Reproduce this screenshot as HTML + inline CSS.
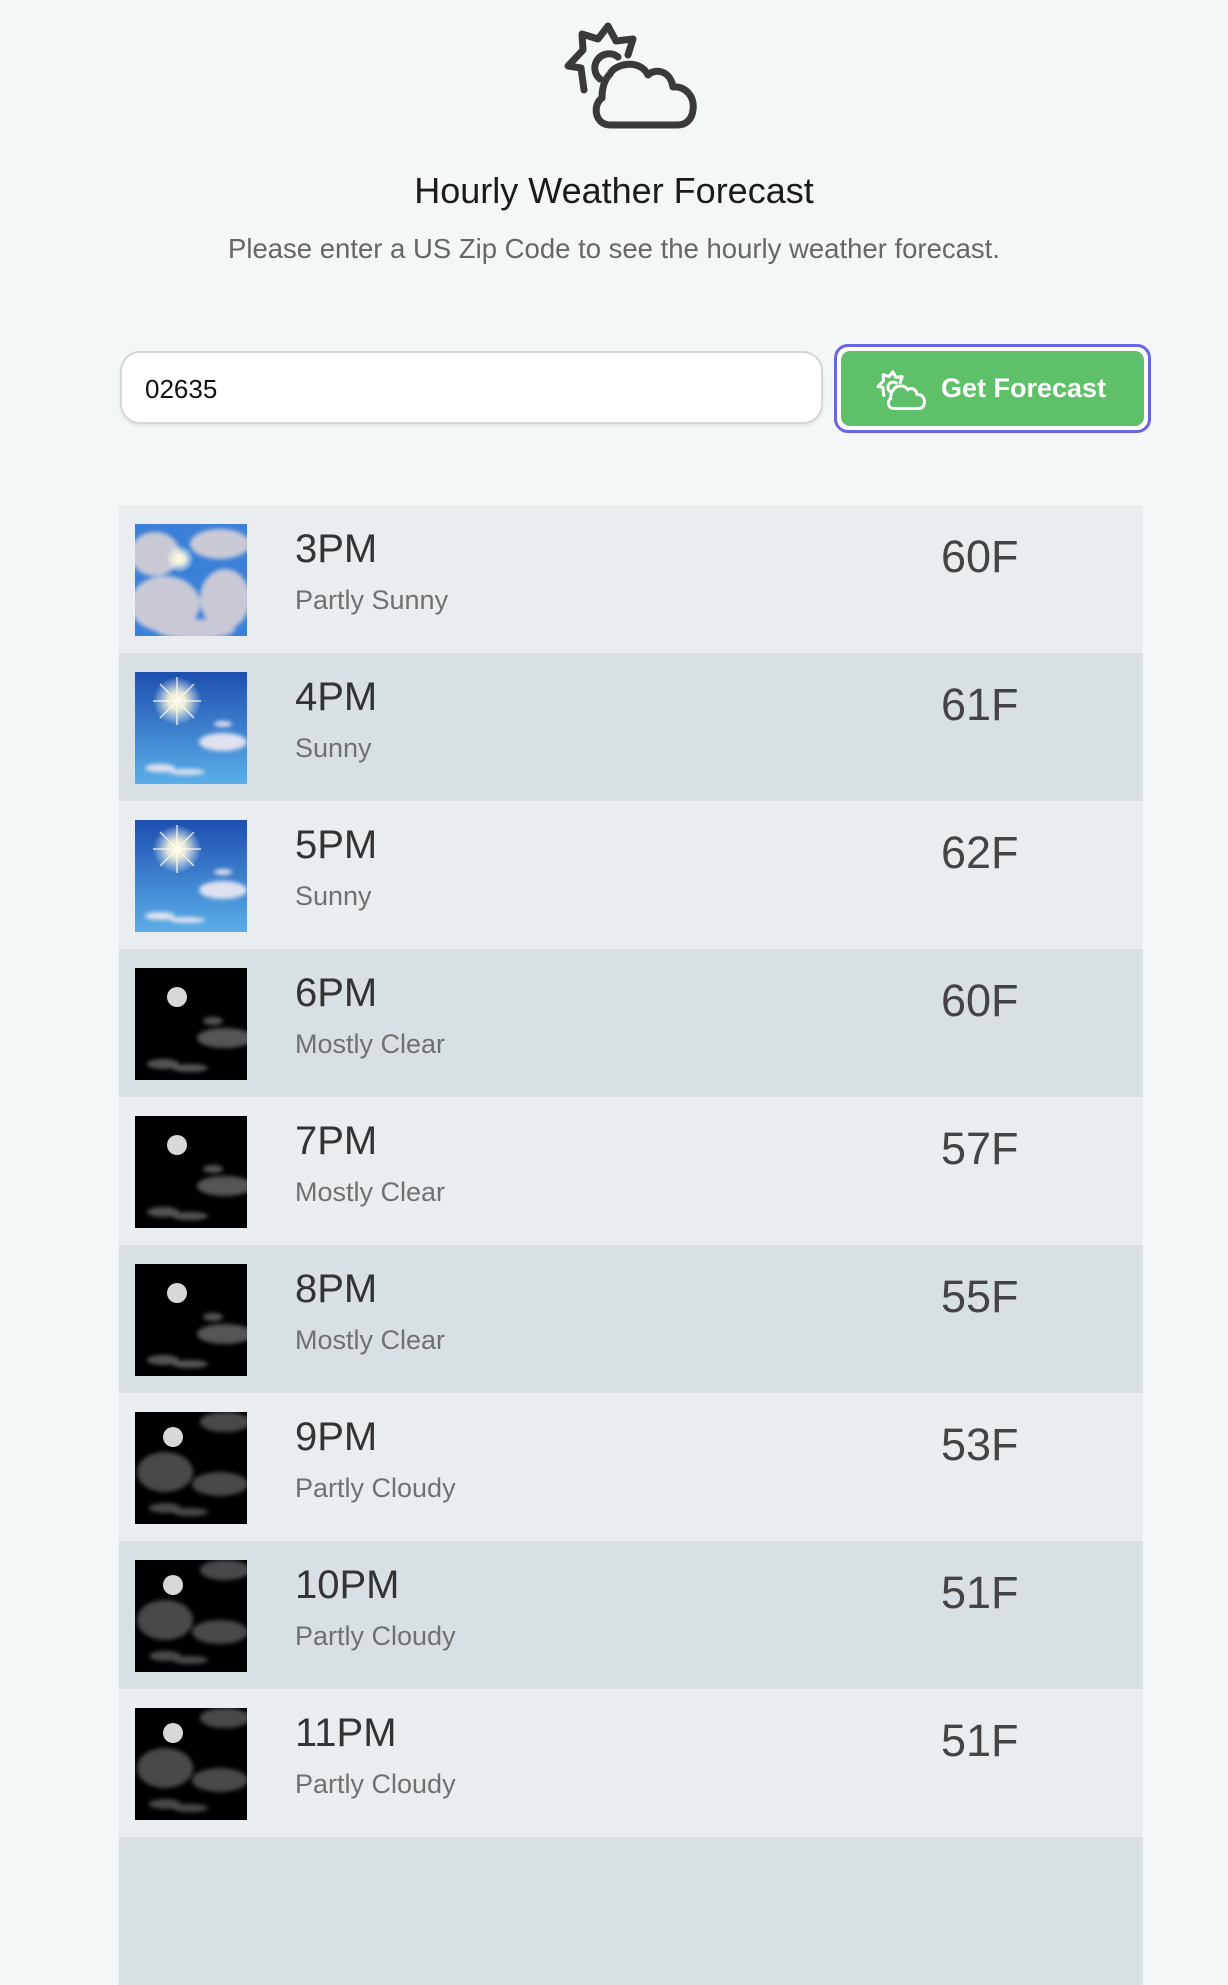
<!DOCTYPE html>
<html><head><meta charset="utf-8"><style>
*{margin:0;padding:0;box-sizing:border-box}
body{width:1228px;height:1852px;overflow:hidden;background:#f4f7f8;font-family:"Liberation Sans",sans-serif;position:relative;color:#222}
.logo{position:absolute;left:540px;top:0}
h1{position:absolute;top:170px;left:0;width:1228px;text-align:center;font-size:36px;font-weight:normal;color:#1a1a1a}
.sub{position:absolute;top:233px;left:0;width:1228px;text-align:center;font-size:27.5px;color:#666}
.inp{position:absolute;left:120px;top:351px;width:703px;height:73px;background:#fff;border:2px solid #d6d6d6;border-radius:20px;box-shadow:0 2px 3px rgba(0,0,0,.08);font-size:26px;padding:21px 23px;color:#111}
.btnwrap{position:absolute;left:834px;top:344px;width:317px;height:89px;border:3px solid #6666e6;border-radius:14px;background:#fff;padding:4px}
.btn{width:100%;height:100%;background:#5fc06a;border-radius:9px;color:#fff;font-size:27px;font-weight:bold;display:flex;align-items:center;padding-left:34px}
.btn svg{margin-right:14px}
.list{position:absolute;left:119px;top:505px;width:1024px}
.row{height:148px;position:relative;background:#e9edf0}
.row:nth-child(even){background:#d8e0e3}
.row svg{position:absolute;left:16px;top:19px}
.t{position:absolute;left:176px;top:22px;font-size:40px;color:#333}
.c{position:absolute;left:176px;top:80px;font-size:27px;color:#707070}
.f{position:absolute;left:822px;top:26px;font-size:45px;color:#444}
</style></head><body>
<svg class="logo" width="180" height="150" viewBox="0 0 180 150" fill="none" stroke="#3a3a3a" stroke-width="7" stroke-linejoin="round" stroke-linecap="round">
<path d="M88,55 L93,39 L76,41 L68,26 L58,39 L42,34 L43,50 L28,66 L41,68 L44,90"/>
<path d="M78,57 A14,14 0 0 0 60,79"/>
<path d="M70,125 C55,125 52,105 62,98 C62,85 66,78 70,74 C74,64 100,58 108,75 C115,68 130,70 133,87 C145,86 155,96 153,110 C152,120 145,125 138,125 Z"/>
</svg>
<h1>Hourly Weather Forecast</h1>
<div class="sub">Please enter a US Zip Code to see the hourly weather forecast.</div>
<div class="inp">02635</div>
<div class="btnwrap"><div class="btn"><svg width="52" height="44" viewBox="20 15 140 115" fill="none" stroke="#fff" stroke-width="8" stroke-linejoin="round" stroke-linecap="round"><path d="M88,55 L93,39 L76,41 L68,26 L58,39 L42,34 L43,50 L28,66 L41,68 L44,90"/><path d="M78,57 A14,14 0 0 0 60,79"/><path d="M70,125 C55,125 52,105 62,98 C62,85 66,78 70,74 C74,64 100,58 108,75 C115,68 130,70 133,87 C145,86 155,96 153,110 C152,120 145,125 138,125 Z"/></svg>Get Forecast</div></div>

<svg width="0" height="0" style="position:absolute">
<defs>
<linearGradient id="sky" x1="0" y1="0" x2="0" y2="1"><stop offset="0" stop-color="#1e4fb0"/><stop offset="1" stop-color="#5aaee8"/></linearGradient>
<radialGradient id="sun"><stop offset="0" stop-color="#fffdf0"/><stop offset=".35" stop-color="#fff8d8" stop-opacity=".9"/><stop offset="1" stop-color="#fff" stop-opacity="0"/></radialGradient>
<filter id="bl"><feGaussianBlur stdDeviation="2"/></filter>
<symbol id="ps" viewBox="0 0 112 112"><rect width="112" height="112" fill="#3a7fd8"/><g fill="#c9c9d6" filter="url(#bl)"><ellipse cx="20" cy="30" rx="25" ry="22"/><ellipse cx="85" cy="20" rx="30" ry="15"/><ellipse cx="30" cy="80" rx="35" ry="28"/><ellipse cx="90" cy="75" rx="25" ry="30"/><ellipse cx="60" cy="105" rx="40" ry="10"/></g><circle cx="45" cy="35" r="14" fill="url(#sun)"/></symbol>
<symbol id="su" viewBox="0 0 112 112"><rect width="112" height="112" fill="url(#sky)"/><circle cx="42" cy="29" r="24" fill="url(#sun)"/><g stroke="#fffbe8" stroke-width="1.5" opacity=".8"><path d="M42,5 V53 M18,29 H66 M25,12 L59,46 M59,12 L25,46"/></g><g fill="#e8e6f2" filter="url(#bl)" opacity=".95"><ellipse cx="88" cy="70" rx="24" ry="9"/><ellipse cx="88" cy="52" rx="9" ry="3"/><ellipse cx="25" cy="96" rx="15" ry="4"/><ellipse cx="52" cy="100" rx="18" ry="3"/></g></symbol>
<symbol id="mc" viewBox="0 0 112 112"><rect width="112" height="112" fill="#000"/><circle cx="42" cy="29" r="10" fill="#d8d8d8"/><g fill="#555" filter="url(#bl)"><ellipse cx="90" cy="70" rx="28" ry="10"/><ellipse cx="78" cy="53" rx="10" ry="4"/><ellipse cx="28" cy="96" rx="16" ry="5"/><ellipse cx="55" cy="100" rx="18" ry="4"/></g></symbol>
<symbol id="pc" viewBox="0 0 112 112"><rect width="112" height="112" fill="#000"/><circle cx="38" cy="25" r="10" fill="#d8d8d8"/><g fill="#4a4a4a" filter="url(#bl)"><ellipse cx="90" cy="10" rx="25" ry="10"/><ellipse cx="30" cy="60" rx="28" ry="20"/><ellipse cx="85" cy="72" rx="28" ry="12"/><ellipse cx="30" cy="96" rx="16" ry="5"/><ellipse cx="55" cy="100" rx="18" ry="4"/></g></symbol>
</defs></svg>

<div class="list">
<div class="row"><svg width="112" height="112"><use href="#ps"/></svg><div class="t">3PM</div><div class="c">Partly Sunny</div><div class="f">60F</div></div>
<div class="row"><svg width="112" height="112"><use href="#su"/></svg><div class="t">4PM</div><div class="c">Sunny</div><div class="f">61F</div></div>
<div class="row"><svg width="112" height="112"><use href="#su"/></svg><div class="t">5PM</div><div class="c">Sunny</div><div class="f">62F</div></div>
<div class="row"><svg width="112" height="112"><use href="#mc"/></svg><div class="t">6PM</div><div class="c">Mostly Clear</div><div class="f">60F</div></div>
<div class="row"><svg width="112" height="112"><use href="#mc"/></svg><div class="t">7PM</div><div class="c">Mostly Clear</div><div class="f">57F</div></div>
<div class="row"><svg width="112" height="112"><use href="#mc"/></svg><div class="t">8PM</div><div class="c">Mostly Clear</div><div class="f">55F</div></div>
<div class="row"><svg width="112" height="112"><use href="#pc"/></svg><div class="t">9PM</div><div class="c">Partly Cloudy</div><div class="f">53F</div></div>
<div class="row"><svg width="112" height="112"><use href="#pc"/></svg><div class="t">10PM</div><div class="c">Partly Cloudy</div><div class="f">51F</div></div>
<div class="row"><svg width="112" height="112"><use href="#pc"/></svg><div class="t">11PM</div><div class="c">Partly Cloudy</div><div class="f">51F</div></div>
<div class="row"></div>
</div>
</body></html>
